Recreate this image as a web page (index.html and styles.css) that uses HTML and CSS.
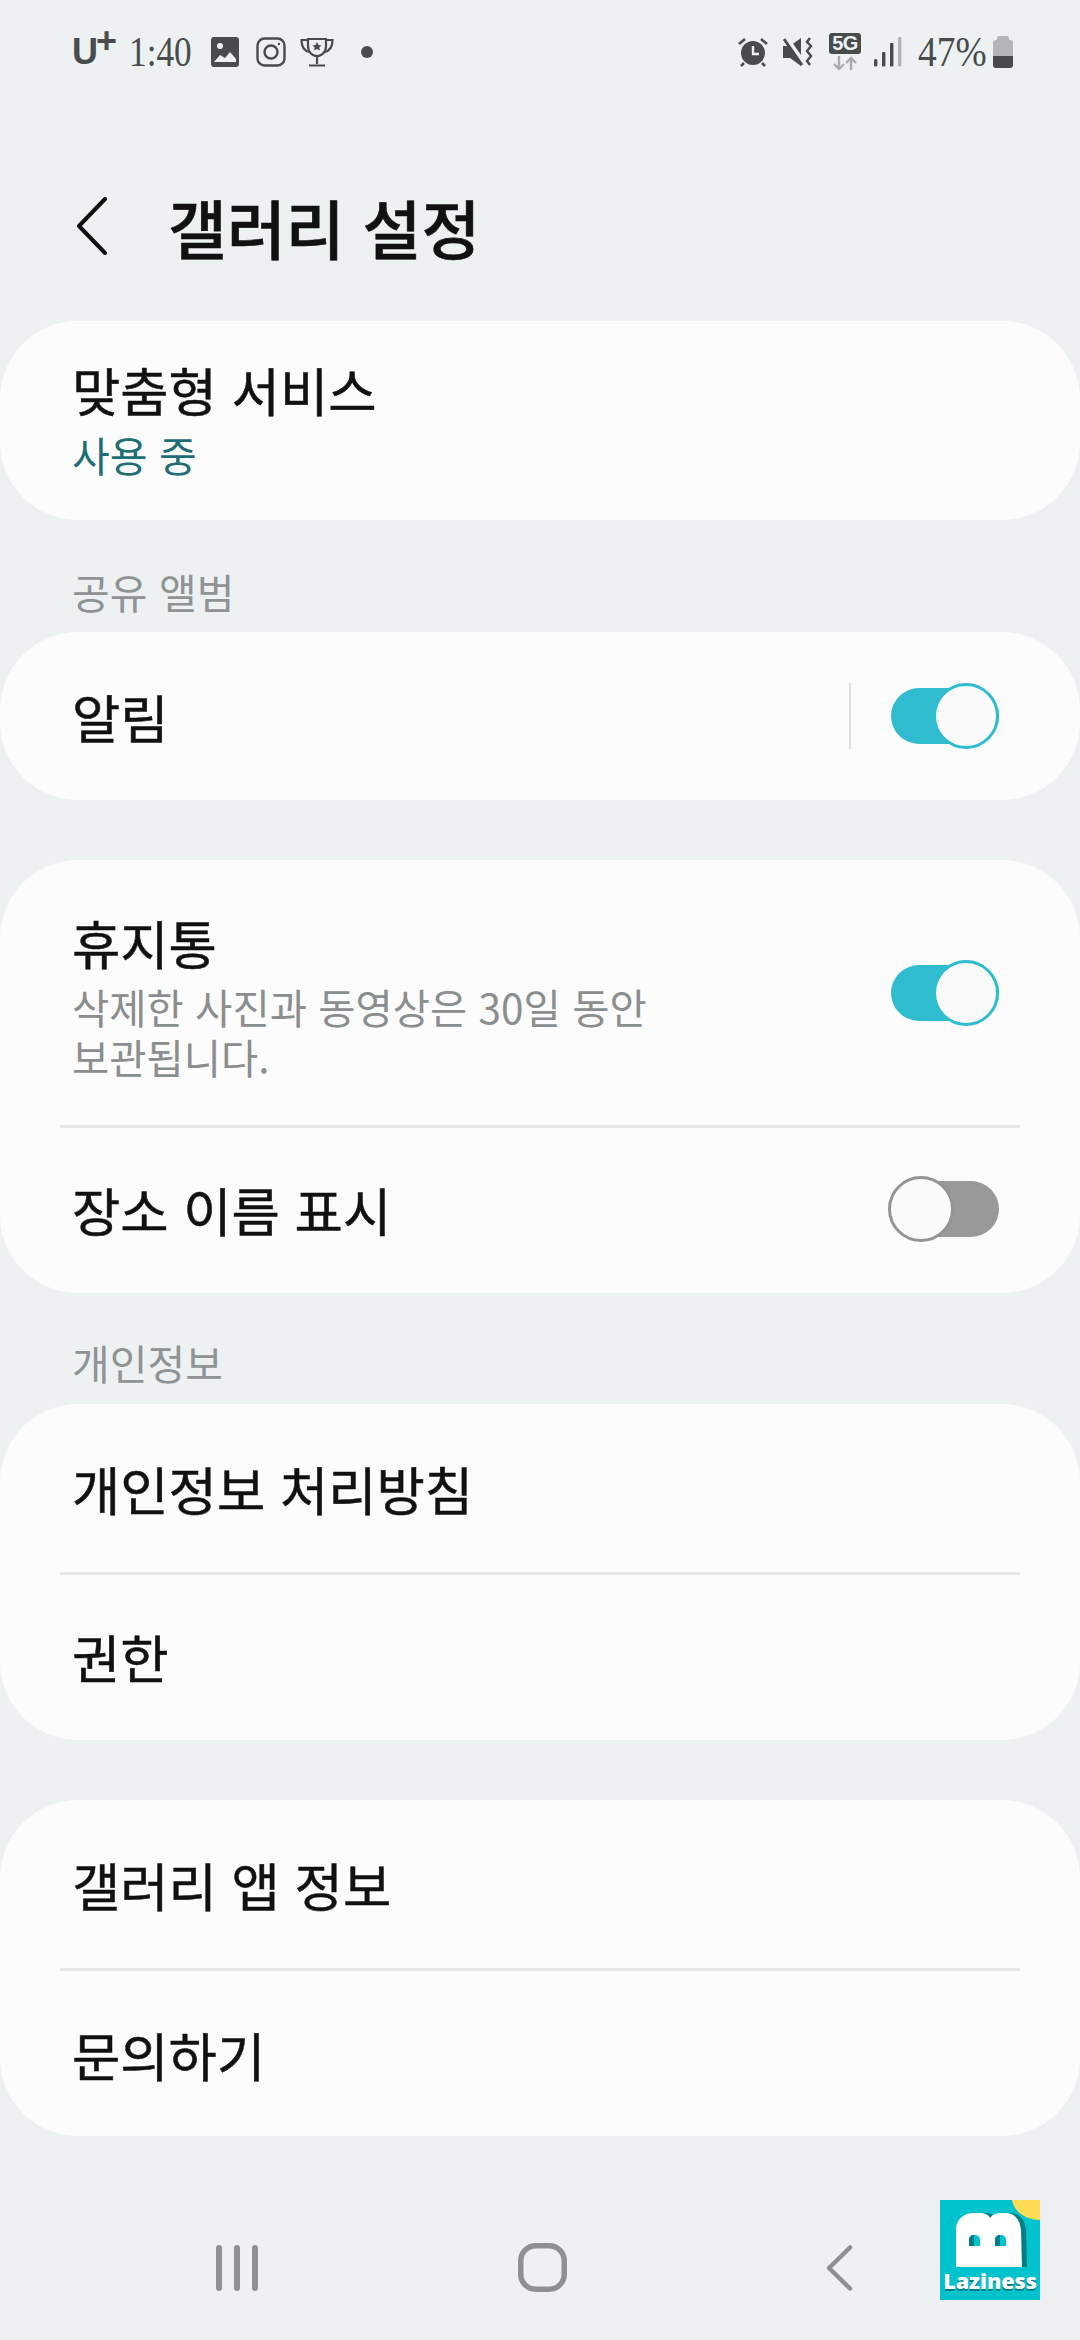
FILE: index.html
```html
<!DOCTYPE html>
<html lang="ko">
  <head>
    <meta charset="UTF-8" />
    <meta name="viewport" content="width=device-width, initial-scale=1.0" />
    <title>갤러리 설정</title>
    <link rel="stylesheet" href="styles.css">
  </head>
  <body>
    <div class="screen">
      <div class="statusbar">
        <div class="status-left">
          <span class="carrier">U<sup>+</sup></span>
          <span class="clock">1:40</span>
          <svg class="ic-pic" width="28" height="30" viewBox="0 0 28 30"><rect width="28" height="30" rx="3" fill="#484c4d"/><circle cx="9" cy="9" r="3" fill="#edf1f2"/><path d="M3 25l6-7 5 3 5-6 6 7v3H3z" fill="#edf1f2"/></svg>
          <svg class="ic-insta" width="30" height="30" viewBox="0 0 30 30" fill="none" stroke="#484c4d" stroke-width="2.4"><rect x="1.5" y="1.5" width="27" height="27" rx="7"/><circle cx="15" cy="15" r="6.5"/><circle cx="23" cy="7" r="1.2" fill="#484c4d" stroke="none"/></svg>
          <svg class="ic-trophy" width="34" height="30" viewBox="0 0 34 30" fill="none" stroke="#484c4d" stroke-width="2.2"><path d="M8 2h18v7c0 6-4 10-9 10S8 15 8 9z"/><path d="M8 3H1.500c0 7 3 11 8 12M26 3h6.500c0 7-3 11-8 12"/><path d="M17 19v8M9 28.500h16"/><path d="M17 5l1.500 3 3 .4-2.200 2.100.6 3-2.900-1.500-2.900 1.500.6-3-2.200-2.100 3-.4z" fill="#484c4d" stroke="none"/></svg>
          <span class="dot"></span>
        </div>
        <div class="status-right">
          <svg class="ic-alarm" width="30" height="30" viewBox="0 0 30 30"><circle cx="15" cy="16" r="12" fill="#484c4d"/><path d="M15 9v8h6" fill="none" stroke="#edf1f2" stroke-width="2.400"/><path d="M1 7l6-5M29 7l-6-5M6 26l-3 3M24 26l3 3" stroke="#484c4d" stroke-width="2.600"/></svg>
          <svg class="ic-mute" width="30" height="30" viewBox="0 0 30 30"><path d="M0 9h7l11-8v28L7 21H0z" fill="#484c4d"/><path d="M2 0l19 27" stroke="#edf1f2" stroke-width="5.500"/><path d="M1 2l18 26" stroke="#484c4d" stroke-width="2.800"/><path d="M27 1l-3 4 4 4-4 5 4 5-4 5 3 4" fill="none" stroke="#484c4d" stroke-width="2.400"/></svg>
          <div class="net">
            <span class="net-badge">5G</span>
            <svg width="26" height="14" viewBox="0 0 26 14" fill="none" stroke="#a9adae" stroke-width="2.400"><path d="M7 0v13M2 8l5 5 5-5M19 14V2M14 7l5-5 5 5"/></svg>
          </div>
          <svg class="ic-signal" width="28" height="30" viewBox="0 0 28 30"><rect x="0" y="22" width="3.400" height="7.500" rx="1.500" fill="#484c4d"/><rect x="8" y="15" width="3.400" height="14.500" rx="1" fill="#484c4d"/><rect x="16" y="6" width="3.400" height="23.500" rx="1" fill="#484c4d"/><rect x="24" y="0" width="3.400" height="29.500" rx="1" fill="#b3b6b7"/></svg>
          <span class="battery-text">47%</span>
          <svg class="battery" width="20" height="32" viewBox="0 0 20 32"><path d="M4 4V2a2 2 0 0 1 2-2h8a2 2 0 0 1 2 2v2h1a3 3 0 0 1 3 3v13H0V7a3 3 0 0 1 3-3z" fill="#b3b6b7"/><path d="M0 20h20v9a3 3 0 0 1-3 3H3a3 3 0 0 1-3-3z" fill="#484c4d"/></svg>
        </div>
      </div>

      <div class="topbar">
        <svg class="back" width="32" height="58" viewBox="0 0 32 58" fill="none" stroke="#111" stroke-width="4" stroke-linecap="round" stroke-linejoin="round"><path d="M29 2L3 29l26 27"/></svg>
        <h1 class="page-title">갤러리 설정</h1>
      </div>

      <div class="card">
        <div class="row row-double">
          <div class="row-text double-text">
            <div class="row-title">맞춤형 서비스</div>
            <div class="row-status">사용 중</div>
          </div>
        </div>
      </div>

      <div class="section-label label-shared">공유 앨범</div>
      <div class="card">
        <div class="row row-top">
          <div class="row-title">알림</div>
          <div class="row-side">
            <span class="vline"></span>
            <span class="switch on"><span class="knob"></span></span>
          </div>
        </div>
      </div>

      <div class="card card-gap">
        <div class="row row-trash">
          <div class="row-text trash-text">
            <div class="row-title">휴지통</div>
            <div class="row-desc">삭제한 사진과 동영상은 30일 동안<br>보관됩니다.</div>
          </div>
          <span class="switch on"><span class="knob"></span></span>
        </div>
        <div class="divider"></div>
        <div class="row row-low">
          <div class="row-title">장소 이름 표시</div>
          <span class="switch off"><span class="knob"></span></span>
        </div>
      </div>

      <div class="section-label label-private">개인정보</div>
      <div class="card">
        <div class="row row-top">
          <div class="row-title">개인정보 처리방침</div>
        </div>
        <div class="divider"></div>
        <div class="row row-low">
          <div class="row-title">권한</div>
        </div>
      </div>

      <div class="card card-gap">
        <div class="row row-top">
          <div class="row-title">갤러리 앱 정보</div>
        </div>
        <div class="divider"></div>
        <div class="row">
          <div class="row-title">문의하기</div>
        </div>
      </div>

      <div class="navbar">
        <svg width="42" height="46" viewBox="0 0 42 46" fill="#8e9192"><rect x="0" y="0" width="6" height="46" rx="3"/><rect x="18" y="0" width="6" height="46" rx="3"/><rect x="36" y="0" width="6" height="46" rx="3"/></svg>
        <svg width="49" height="49" viewBox="0 0 49 49" fill="none" stroke="#8e9192" stroke-width="5.500"><rect x="2.750" y="2.750" width="43.500" height="43.500" rx="15"/></svg>
        <svg width="27" height="46" viewBox="0 0 27 46" fill="none" stroke="#8e9192" stroke-width="4.500" stroke-linecap="round" stroke-linejoin="round"><path d="M24 2.500L3 23l21 20.500"/></svg>
      </div>

      <div class="watermark">
        <svg width="100" height="100" viewBox="0 0 100 100">
          <rect width="100" height="100" fill="#00c3cd"/>
          <path d="M72 0h28v20c-14 0-26-8-28-20z" fill="#ffdc55"/>
          <path d="M21 67V30c0-11 8-17 18-17h6c5 0 9 2 10 5 2-3 6-5 11-5h4c10 0 15 7 16 17l1 37z" fill="#007d84"/>
          <path d="M16 67V30c0-11 8-17 18-17h6c5 0 9 2 10 5 2-3 6-5 11-5h4c10 0 15 7 16 17l1 37z" fill="#fff"/>
          <path d="M29 46v-6c0-3 2-5 5.500-5s5.500 2 5.500 5v6zM55 46v-6c0-3 2-5 5.500-5s5.500 2 5.500 5v6z" fill="#00c3cd"/>
          <path d="M29 46v-6c0-3 2-5 5-5v11zM55 46v-6c0-3 2-5 5-5v11z" fill="#007d84"/>
        </svg>
        <span class="watermark-text">Laziness</span>
      </div>
    </div>
  </body>
</html>
```

FILE: styles.css
```css
* {
  box-sizing: border-box;
}
html, body {
  margin: 0;
  padding: 0;
}
body {
  background: #edf1f2;
  font-family: "Noto Sans CJK KR", "Noto Sans", sans-serif;
  color: #111;
}
.screen {
  position: relative;
  width: 1080px;
  height: 2340px;
  overflow: hidden;
}

/* status bar */
.statusbar {
  height: 104px;
  padding: 33px 67px 0 72px;
  display: flex;
  justify-content: space-between;
  align-items: flex-start;
}
.status-left, .status-right {
  display: flex;
  align-items: center;
  height: 38px;
  color: #484c4d;
}
.carrier {
  font-family: "Liberation Sans", sans-serif;
  font-weight: 700;
  font-size: 36px;
  line-height: 38px;
  width: 57px;
  white-space: nowrap;
}
.carrier sup {
  font-size: 36px;
  line-height: 0;
  vertical-align: 11px;
  margin-left: -2px;
}
.clock {
  font-family: "Liberation Serif", serif;
  font-size: 43px;
  line-height: 38px;
  width: 82px;
  transform: scaleX(0.82);
  transform-origin: left center;
}
.ic-insta {
  margin-left: 17px;
}
.ic-trophy {
  margin-left: 14px;
}
.dot {
  width: 12px;
  height: 12px;
  border-radius: 50%;
  background: #484c4d;
  margin-left: 27px;
}
.ic-mute {
  margin-left: 15px;
}
.net {
  margin-left: 16px;
  width: 32px;
  display: flex;
  flex-direction: column;
  align-items: center;
  gap: 2px;
  margin-top: -2px;
}
.net-badge {
  width: 32px;
  height: 21px;
  border-radius: 3px;
  background: #484c4d;
  color: #edf1f2;
  font-family: "Liberation Sans", sans-serif;
  font-weight: 700;
  font-size: 20px;
  line-height: 21px;
  letter-spacing: -0.5px;
  text-align: center;
}
.ic-signal {
  margin-left: 13px;
}
.battery-text {
  font-family: "Liberation Serif", serif;
  font-size: 43px;
  line-height: 38px;
  margin-left: 16px;
  width: 75px;
  white-space: nowrap;
  transform: scaleX(0.87);
  transform-origin: left center;
}

/* title */
.topbar {
  height: 217px;
  padding: 93px 0 0 76px;
  display: flex;
  align-items: flex-start;
}
.back {
  flex: none;
}
.page-title {
  margin: -16px 0 0 60px;
  font-size: 64px;
  font-weight: 500;
  line-height: 90px;
  color: #111;
  -webkit-text-stroke: 0.6px #111;
}

/* cards */
.card {
  background: #fcfcfc;
  border-radius: 78px;
}
.card-gap {
  margin-top: 60px;
}
.row {
  display: flex;
  align-items: center;
  justify-content: space-between;
  height: 165px;
  padding: 0 81px 0 72px;
}
.row-low {
  padding-bottom: 3px;
}
.row-top {
  height: 168px;
}
.row-double {
  height: 199px;
}
.row-trash {
  height: 265px;
}
.row-title {
  font-size: 52.5px;
  line-height: 60px;
  white-space: nowrap;
  -webkit-text-stroke: 0.5px #111;
}
.double-text {
  margin-top: -1px;
}
.trash-text {
  margin-top: 9px;
}
.row-status {
  font-size: 41px;
  line-height: 56px;
  margin-top: 7px;
  color: #1f6d75;
}
.row-desc {
  font-size: 40.5px;
  line-height: 50px;
  color: #8b8e8f;
  margin-top: 10px;
}
.row-side {
  display: flex;
  align-items: center;
}
.vline {
  width: 2px;
  height: 66px;
  background: #e0e0e0;
  margin-right: 40px;
}
.divider {
  height: 3px;
  margin: 0 60px;
  background: #e6e6e6;
}
.section-label {
  font-size: 41px;
  line-height: 54px;
  color: #909394;
  padding-left: 72px;
}
.label-shared {
  margin-top: 44px;
  margin-bottom: 14px;
}
.label-private {
  margin-top: 42px;
  margin-bottom: 15px;
}

/* switches */
.switch {
  position: relative;
  flex: none;
  display: block;
  width: 108px;
  height: 56px;
  border-radius: 28px;
}
.switch.on {
  background: #2fbccf;
}
.switch.off {
  background: #999999;
}
.knob {
  position: absolute;
  top: -5px;
  width: 66px;
  height: 66px;
  border-radius: 50%;
  background: #fafafa;
  border: 3px solid #2fbccf;
}
.switch.on .knob {
  right: 0;
}
.switch.off .knob {
  left: -3px;
  border-color: #949494;
}

/* nav bar */
.navbar {
  position: absolute;
  left: 216px;
  right: 227px;
  top: 2243px;
  display: flex;
  justify-content: space-between;
  align-items: center;
}

/* logo stamp over the corner */
.watermark {
  position: absolute;
  left: 940px;
  top: 2200px;
  width: 100px;
  height: 100px;
}
.watermark svg {
  display: block;
}
.watermark-text {
  position: absolute;
  left: 0;
  right: 0;
  top: 65px;
  text-align: center;
  font-family: "Open Sans", sans-serif;
  font-weight: 800;
  font-size: 21.5px;
  line-height: 32px;
  color: #fff;
  text-shadow: 0 1.5px 0 #007d84;
}
```
